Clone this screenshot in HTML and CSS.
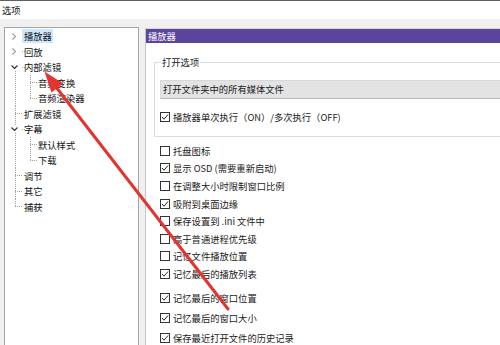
FILE: index.html
```html
<!DOCTYPE html>
<html lang="zh-CN">
<head>
<meta charset="utf-8">
<title>选项</title>
<link rel="stylesheet" href="styles.css">
</head>
<body>
<div class="window">
  <div class="titlebar">选项</div>
  <div class="content">
    <div class="tree">
      <div class="row r-top"><span class="tw"><svg class="chev-r" width="4" height="7" viewBox="0 0 4 7"><polyline points="0.5,0.5 3.5,3.5 0.5,6.5"/></svg></span><span class="lbl sel">播放器</span></div>
      <div class="row r-top"><span class="tw"><svg class="chev-r" width="4" height="7" viewBox="0 0 4 7"><polyline points="0.5,0.5 3.5,3.5 0.5,6.5"/></svg></span><span class="lbl">回放</span></div>
      <div class="row r-open"><span class="tw tw-d"><svg class="chev-d" width="7" height="4" viewBox="0 0 7 4"><polyline points="0.5,0.5 3.5,3.5 6.5,0.5"/></svg></span><span class="lbl">内部滤镜</span></div>
      <div class="row c-mid"><span class="tw2"></span><span class="lbl">音频变换</span></div>
      <div class="row c-last"><span class="tw2"></span><span class="lbl">音频渲染器</span></div>
      <div class="row r-mid"><span class="tw"></span><span class="lbl">扩展滤镜</span></div>
      <div class="row r-open2"><span class="tw tw-d"><svg class="chev-d" width="7" height="4" viewBox="0 0 7 4"><polyline points="0.5,0.5 3.5,3.5 6.5,0.5"/></svg></span><span class="lbl">字幕</span></div>
      <div class="row c-mid"><span class="tw2"></span><span class="lbl">默认样式</span></div>
      <div class="row c-last"><span class="tw2"></span><span class="lbl">下载</span></div>
      <div class="row r-mid"><span class="tw"></span><span class="lbl">调节</span></div>
      <div class="row r-mid"><span class="tw"></span><span class="lbl">其它</span></div>
      <div class="row r-last"><span class="tw"></span><span class="lbl">捕获</span></div>
    </div>
    <div class="panel">
      <div class="panel-head">播放器</div>
      <fieldset class="group">
        <legend class="legend">打开选项</legend>
        <div class="combo">打开文件夹中的所有媒体文件</div>
        <label class="check group-check"><span class="box on"></span><span>播放器单次执行（ON）/多次执行（OFF)</span></label>
      </fieldset>
      <div class="list">
        <label class="check"><span class="box"></span><span>托盘图标</span></label>
        <label class="check"><span class="box on"></span><span>显示 OSD (需要重新启动)</span></label>
        <label class="check"><span class="box"></span><span>在调整大小时限制窗口比例</span></label>
        <label class="check"><span class="box on"></span><span>吸附到桌面边缘</span></label>
        <label class="check"><span class="box"></span><span>保存设置到 .ini 文件中</span></label>
        <label class="check"><span class="box"></span><span>高于普通进程优先级</span></label>
        <label class="check"><span class="box"></span><span>记忆文件播放位置</span></label>
        <label class="check"><span class="box on"></span><span>记忆最后的播放列表</span></label>
        <label class="check mid spaced"><span class="box on"></span><span>记忆最后的窗口位置</span></label>
        <label class="check mid"><span class="box on"></span><span>记忆最后的窗口大小</span></label>
        <label class="check mid"><span class="box on"></span><span>保存最近打开文件的历史记录</span></label>
      </div>
    </div>
  </div>
  <svg class="arrow" width="500" height="345" viewBox="0 0 500 345">
    <line x1="56" y1="87" x2="228" y2="309" stroke="#e3342f" stroke-width="3" stroke-linecap="round"/>
    <polygon points="44.5,71.5 63,83.5 51.5,92.5" fill="#e3342f"/>
  </svg>
</div>
</body>
</html>
```

FILE: styles.css
```css
* { box-sizing: border-box; margin: 0; padding: 0; }

html, body {
  width: 500px;
  height: 345px;
  overflow: hidden;
}

body {
  font-family: "Noto Sans CJK SC", "Microsoft YaHei", sans-serif;
  font-size: 9.3px;
  color: #1a1a1a;
  background: #ffffff;
  --dv: repeating-linear-gradient(to bottom, #a3a3a3 0 1px, transparent 1px 2px);
  --dh: repeating-linear-gradient(to right, #a3a3a3 0 1px, transparent 1px 2px);
}

.window {
  position: relative;
  width: 500px;
  height: 345px;
  display: flex;
  flex-direction: column;
}

.titlebar {
  height: 19px;
  flex: 0 0 19px;
  border-top: 1px solid #5f5f5f;
  background: #ffffff;
  padding-left: 2px;
  line-height: 18px;
  color: #111;
}

.content {
  flex: 1;
  min-height: 0;
  display: flex;
  gap: 6px;
  background: #f0f0f0;
  padding: 8px 0 0 4px;
}

/* ---------- tree ---------- */
.tree {
  flex: 0 0 135px;
  background: #ffffff;
  border: 1px solid #a5a5a5;
  border-bottom: none;
  padding-top: 0.5px;
  display: flex;
  flex-direction: column;
}

.row {
  height: 15.5px;
  display: flex;
  align-items: center;
  background-repeat: no-repeat;
  color: #111;
}

.tw {
  flex: 0 0 17px;
  height: 100%;
  display: flex;
  align-items: center;
  padding-left: 7px;
}
.tw.tw-d { padding-left: 6px; }

.tw2 { flex: 0 0 31px; height: 100%; }

.chev-r polyline { fill: none; stroke: #9a9a9a; stroke-width: 1.1; }
.chev-d polyline { fill: none; stroke: #333333; stroke-width: 1.1; }

.lbl {
  height: 14px;
  line-height: 14px;
  padding: 0 1.5px 0 2px;
  white-space: nowrap;
}
.lbl.sel { background: #cce8ff; }

.r-top {
  background-image: var(--dh);
  background-position: 17px 7px;
  background-size: 4px 1px;
}
.r-open {
  background-image: var(--dv), var(--dh);
  background-position: 10px 11px, 17px 7px;
  background-size: 1px 5px, 4px 1px;
}
.r-open2 {
  background-image: var(--dv), var(--dv), var(--dh);
  background-position: 10px 0, 10px 11px, 17px 7px;
  background-size: 1px 4px, 1px 5px, 4px 1px;
}
.r-mid {
  background-image: var(--dv), var(--dh);
  background-position: 10px 0, 10px 7px;
  background-size: 1px 100%, 7px 1px;
}
.r-last {
  background-image: var(--dv), var(--dh);
  background-position: 10px 0, 10px 7px;
  background-size: 1px 8px, 7px 1px;
}
.c-mid {
  background-image: var(--dv), var(--dv), var(--dh);
  background-position: 10px 0, 25px 0, 25px 7px;
  background-size: 1px 100%, 1px 100%, 7px 1px;
}
.c-last {
  background-image: var(--dv), var(--dv), var(--dh);
  background-position: 10px 0, 25px 0, 25px 7px;
  background-size: 1px 100%, 1px 8px, 7px 1px;
}

/* ---------- right panel ---------- */
.panel {
  flex: 0 0 420px;
  margin-top: 1px;
  background: #ffffff;
  border-top: 1px solid #d6d6d6;
  border-left: 1px solid #c4c4c4;
  display: flex;
  flex-direction: column;
}

.panel-head {
  height: 14px;
  flex: 0 0 14px;
  line-height: 14px;
  background: #5b449c;
  color: #ffffff;
  padding-left: 2px;
}

.group {
  margin: 13px 0 0 8px;
  border: 1px solid #dcdcdc;
  padding: 0 0 10px 5px;
  min-width: 0;
}

.legend {
  margin-left: 1px;
  padding: 0 1px;
  line-height: 12px;
  color: #222;
}

.combo {
  margin-top: 12px;
  height: 19px;
  line-height: 17px;
  background: #e3e3e3;
  border: 1px solid #d8d8d8;
  border-bottom-color: #b9b9b9;
  padding-left: 2px;
  color: #1a1a1a;
}

.check {
  display: flex;
  align-items: center;
  gap: 3px;
  height: 17.6px;
  white-space: nowrap;
  color: #1a1a1a;
}

.group-check {
  margin-top: 9px;
  height: 18px;
}

.list {
  margin: 5px 0 0 14px;
  display: flex;
  flex-direction: column;
}

.check.mid { height: 20px; }
.check.spaced { margin-top: 5px; }

.box {
  flex: 0 0 10px;
  width: 10px;
  height: 10px;
  border: 1px solid #333333;
  background: #ffffff;
}

.box.on {
  background-image: url("data:image/svg+xml,%3Csvg xmlns='http://www.w3.org/2000/svg' width='8' height='8' viewBox='0 0 8 8'%3E%3Cpolyline points='1,4 3,6.2 7,1.5' fill='none' stroke='%23222' stroke-width='1'/%3E%3C/svg%3E");
  background-repeat: no-repeat;
  background-position: 0 0;
}

/* ---------- annotation arrow ---------- */
.arrow {
  position: absolute;
  left: 0;
  top: 0;
  pointer-events: none;
}
```
